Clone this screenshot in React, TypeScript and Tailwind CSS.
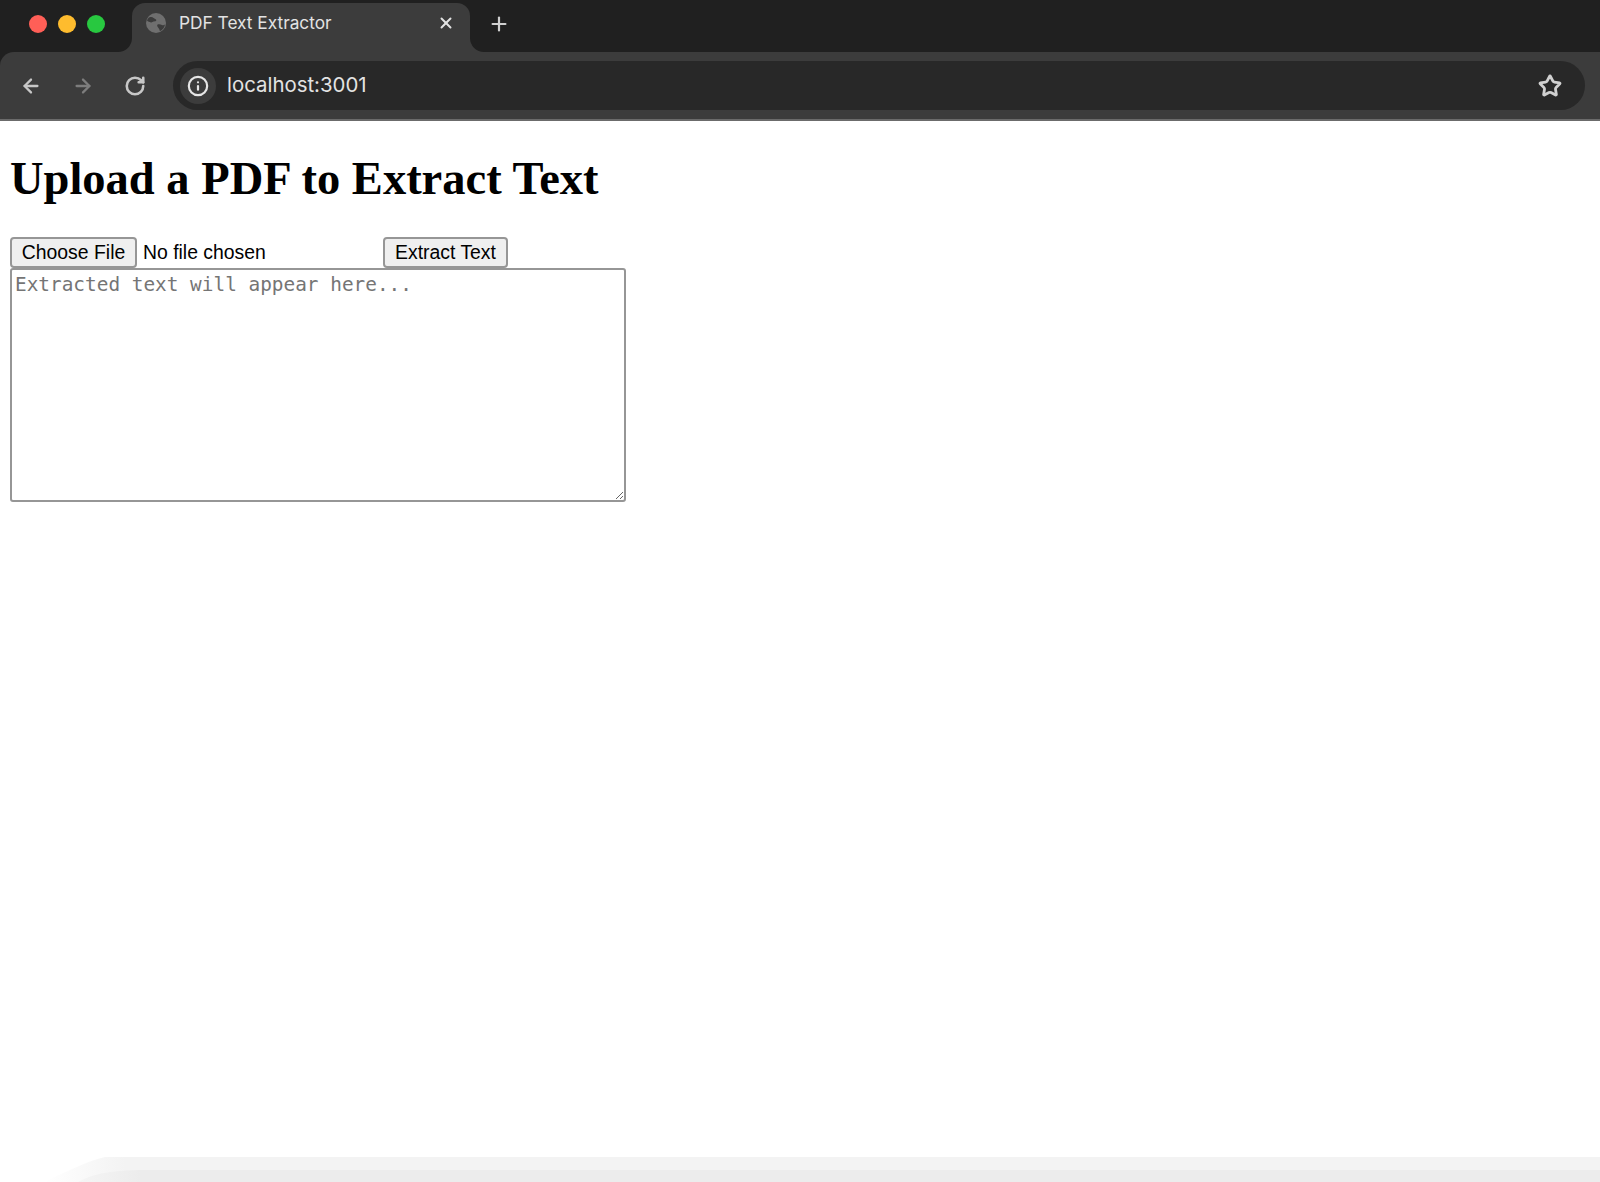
import { ArrowLeft, ArrowRight, RotateCw, Info, Star, X, Plus } from "lucide-react";

function Globe() {
  return (
    <svg width="22" height="22" viewBox="0 0 22 22" className="shrink-0">
      <circle cx="11" cy="11" r="10" fill="#6f6f6f" />
      <path d="M4 5.5c2-.8 3.500-.6 4.600.4 1 .9 2.600.8 2.700 2.200.1 1.300-1.500 1.500-2.600 1.400-1.300-.1-1.400 1.200-2.800.9C4.600 10.100 3 9.500 2 8.500c.4-1.200 1-2.200 2-3z" fill="#3c3c3c" />
      <path d="M12.500 12.500c1.500-.5 3.200-.2 4.500.4 1 .5 2 .2 3-.3-.5 3-2.300 5.400-5 6.600-.6-1-.4-2-1.200-2.800-.9-.9-2.300-2.700-1.300-3.900z" fill="#3c3c3c" />
    </svg>
  );
}

export default function App() {
  return (
    <div className="relative h-[1182px] overflow-hidden bg-white">
      <div className="bg-[#202020]">
        <div className="flex h-[52px] bg-[#3c3c3c]">
          <div className="flex w-[132px] shrink-0 items-center gap-[11px] rounded-br-[14px] bg-[#202020] pb-[5px] pl-[29px]">
            <span className="size-[18px] rounded-full bg-[#ff5f57]" />
            <span className="size-[18px] rounded-full bg-[#febc2e]" />
            <span className="size-[18px] rounded-full bg-[#28c840]" />
          </div>
          <div className="w-[338px] shrink-0 bg-[#202020] pt-[3px]">
            <div className="flex h-[49px] items-center rounded-t-[13px] bg-[#3c3c3c] pb-[9px] pl-[13px] pr-[15px] font-['Inter',sans-serif] text-[17.3px] text-[#e3e3e3]">
              <Globe />
              <span className="ml-[12px] flex-1">PDF Text Extractor</span>
              <X size={18} strokeWidth={2.6} color="#e3e3e3" />
            </div>
          </div>
          <div className="flex flex-1 items-center rounded-bl-[14px] bg-[#202020] pb-[5px] pl-[18px]">
            <Plus size={22} strokeWidth={2.4} color="#d0d0d0" />
          </div>
        </div>
        <div className="flex h-[69px] items-center rounded-tl-[14px] border-b-2 border-[#6b6b6b] bg-[#3c3c3c] pl-[20px] pr-[15px]">
          <ArrowLeft size={22} strokeWidth={2.5} color="#c7c7c7" />
          <ArrowRight size={22} strokeWidth={2.5} color="#7d7d7d" className="ml-[30px]" />
          <RotateCw size={22} strokeWidth={2.8} color="#c7c7c7" className="ml-[30px]" />
          <div className="ml-[27px] flex h-[49px] flex-1 items-center rounded-full bg-[#282828] pl-[7px] pr-[23px]">
            <div className="flex size-[36px] items-center justify-center rounded-full bg-[#3c3c3c]">
              <Info size={22} strokeWidth={2.4} color="#e6e6e6" />
            </div>
            <span className="ml-[11px] flex-1 font-['Inter',sans-serif] text-[20.4px] text-[#e3e3e3]">localhost:3001</span>
            <Star size={24} strokeWidth={2.8} color="#d0d0d0" />
          </div>
        </div>
      </div>

      <main className="pl-[10px]">
        <h1 className="mt-[28px] font-['Liberation_Serif',serif] text-[46.5px] font-bold leading-[60px] text-black">
          Upload a PDF to Extract Text
        </h1>
        <div className="mt-[28px] flex h-[31px] items-start font-['Liberation_Sans',sans-serif] text-[19.4px] text-black">
          <button className="h-[31px] w-[127px] rounded-[4px] border-[2px] border-[#969696] bg-[#efefef] leading-none">Choose File</button>
          <span className="ml-[6px] w-[240px] leading-[31px]">No file chosen</span>
          <button className="h-[31px] w-[125px] rounded-[4px] border-[2px] border-[#969696] bg-[#efefef] leading-none">Extract Text</button>
        </div>
        <textarea
          placeholder="Extracted text will appear here..."
          className="block h-[234px] w-[616px] rounded-[3px] border-[2px] border-[#969696] px-[3px] pt-[3px] pb-[1px] font-['DejaVu_Sans_Mono',monospace] text-[19.4px] leading-[24px] placeholder:text-[#757575]"
        />
      </main>

      <svg className="absolute bottom-0 left-0" width="1600" height="26" viewBox="0 0 1600 26">
        <defs>
          <linearGradient id="fadeA" gradientUnits="userSpaceOnUse" x1="44" x2="125" y1="0" y2="0">
            <stop offset="0" stopColor="#ffffff" />
            <stop offset="1" stopColor="#f3f3f3" />
          </linearGradient>
          <linearGradient id="fadeB" gradientUnits="userSpaceOnUse" x1="78" x2="140" y1="0" y2="0">
            <stop offset="0" stopColor="#f5f5f5" />
            <stop offset="1" stopColor="#ececec" />
          </linearGradient>
        </defs>
        <path d="M44 26 C70 14 85 6 105 1 L1600 1 L1600 26 Z" fill="url(#fadeA)" />
        <path d="M78 26 C90 20 100 15 140 14 L1600 14 L1600 26 Z" fill="url(#fadeB)" />
      </svg>
    </div>
  );
}
